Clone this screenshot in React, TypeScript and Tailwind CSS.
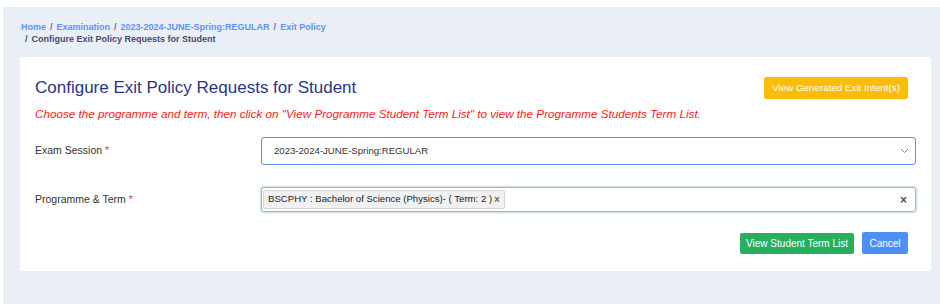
import React from "react";

export default function App() {
  const font = { fontFamily: '"Liberation Sans", Arial, sans-serif' };
  return (
    <div className="w-[940px] h-[304px] bg-white pt-[7px] pl-[3px]" style={font}>
      <div className="w-[937px] h-[297px] bg-[#e9eef7] pl-[17px] pr-[9px] pt-[14px]">
        <div className="text-[9px] font-bold leading-[12px] pl-[1px]">
          <div>
            <span className="text-[#5f93f0]">Home</span>
            <span className="text-[#6b6f8a] mx-[4px]">/</span>
            <span className="text-[#5f93f0]">Examination</span>
            <span className="text-[#6b6f8a] mx-[4px]">/</span>
            <span className="text-[#5f93f0]">2023-2024-JUNE-Spring:REGULAR</span>
            <span className="text-[#6b6f8a] mx-[4px]">/</span>
            <span className="text-[#5f93f0]">Exit Policy</span>
          </div>
          <div className="pl-[4px] text-[#474b6e]">
            <span className="mr-[4px]">/</span>Configure Exit Policy Requests for Student
          </div>
        </div>
        <div className="mt-[12px] bg-white rounded-[3px] h-[214px] pl-[15px] pr-[15px] pt-[20px]">
          <div className="flex items-start justify-between pr-[8px]">
            <div className="text-[17px] leading-[20px] text-[#2b3585] mt-[1px]">
              Configure Exit Policy Requests for Student
            </div>
            <div className="h-[22px] px-[8px] bg-[#fbbd08] rounded-[2px] text-white text-[9.8px] flex items-center">
              View Generated Exit Intent(s)
            </div>
          </div>
          <div className="mt-[8px] text-[11.7px] italic text-[#ff1a1a] leading-[14px]">
            Choose the programme and term, then click on "View Programme Student Term List" to view the Programme Students Term List.
          </div>
          <div className="mt-[16px] flex items-start">
            <div className="w-[226px] text-[10.5px] text-[#333] pt-[6px]">
              Exam Session <span className="text-[#e53935]">*</span>
            </div>
            <div className="flex-1 h-[28px] border border-[#5b8ff0] rounded-[3px] flex items-center justify-between pl-[12px] pr-[6px] text-[9.6px] text-[#333]">
              <span>2023-2024-JUNE-Spring:REGULAR</span>
              <svg width="9" height="6" viewBox="0 0 9 6" fill="none" stroke="#888" strokeWidth="1">
                <path d="M1 1l3.5 3.5L8 1" />
              </svg>
            </div>
          </div>
          <div className="mt-[22px] flex items-start">
            <div className="w-[226px] text-[10.5px] text-[#333] pt-[5px]">
              Programme &amp; Term <span className="text-[#e53935]">*</span>
            </div>
            <div className="flex-1 h-[25px] border border-[#8fc4a0] rounded-[3px] shadow-[0_0_0_1.5px_rgba(143,196,160,0.35)] flex items-center justify-between pl-[1px] pr-[8px]">
              <div className="h-[19px] bg-[#f1f1f1] border border-[#d5d5d5] rounded-[2px] px-[4px] flex items-center text-[9.6px] text-[#222]">
                BSCPHY : Bachelor of Science (Physics)- ( Term: 2 )
                <span className="ml-[2px] text-[#666] text-[10px] font-bold">×</span>
              </div>
              <span className="text-[#555] text-[12px] font-bold">×</span>
            </div>
          </div>
          <div className="mt-[21px] flex justify-end gap-[8px] pr-[8px]">
            <div className="h-[21px] px-[6px] bg-[#27ae60] rounded-[2px] text-white text-[10px] flex items-center">
              View Student Term List
            </div>
            <div className="h-[22px] w-[46px] bg-[#4d8ef7] rounded-[2px] text-white text-[10px] flex items-center justify-center -mt-[1px]">
              Cancel
            </div>
          </div>
        </div>
      </div>
    </div>
  );
}
